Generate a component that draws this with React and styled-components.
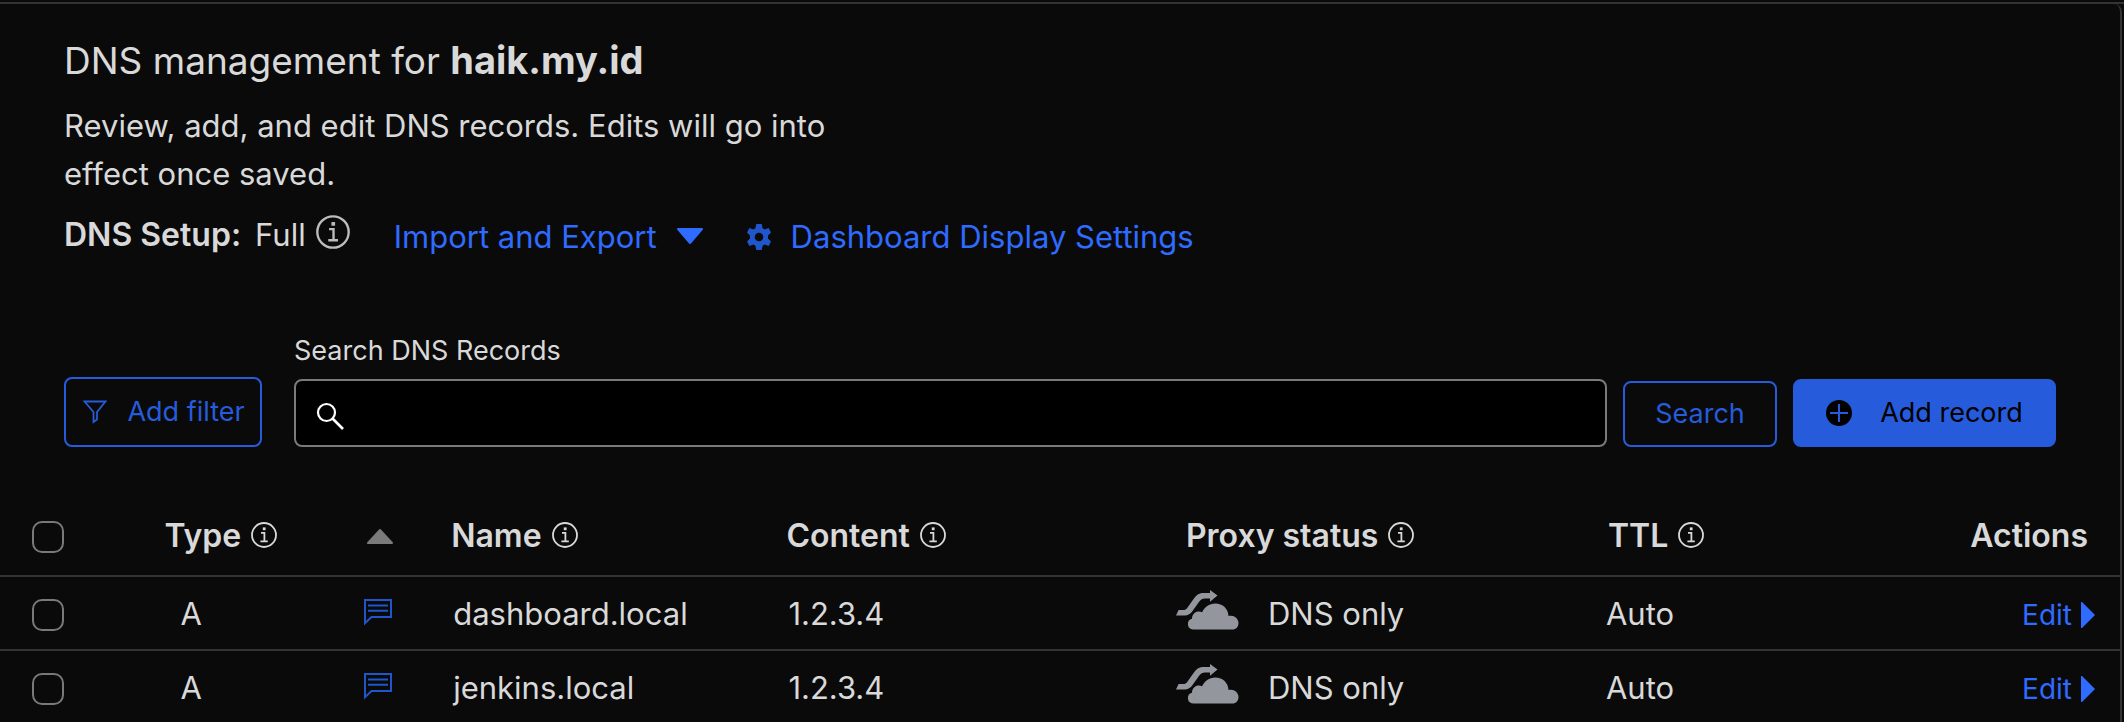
import React from "react";
import styled, { createGlobalStyle } from "styled-components";

const Global = createGlobalStyle`
  *, *::before, *::after { box-sizing: border-box; }
  body {
    margin: 0;
    background: #0a0a0a;
    color: #d9d9d9;
    font-family: Inter, "Liberation Sans", sans-serif;
    font-size: 31px;
    line-height: 48px;
    overflow: hidden;
  }
  button, input { font: inherit; }
  svg { display: block; flex: none; }
`;

const Frame = styled.div`
  margin-top: 2px;
  border-top: 2px solid #333;
`;

const Panel = styled.main`
  margin-right: 2px;
  min-height: calc(100vh - 4px);
  border-right: 2px solid #333;
  border-radius: 8px 8px 0 0;
`;

const Header = styled.header`
  padding: 31px 64px 0;
`;

const Title = styled.h1`
  margin: 0 0 16px;
  font-size: 37px;
  line-height: 50px;
  font-weight: 400;
  & > b { font-size: 38px; }
`;

const Description = styled.p`
  margin: 0;
  max-width: 800px;
`;

const SetupRow = styled.div`
  display: flex;
  align-items: center;
  margin-top: 11px;
  gap: 44px;
`;

const Setup = styled.div`
  display: flex;
  align-items: center;
  gap: 10px;
  & > b { font-size: 32px; font-weight: 600; margin-right: 4px; }
  & > svg { margin-bottom: 6px; color: #bdbdbd; }
`;

const LinkButton = styled.button`
  display: flex;
  align-items: center;
  gap: 20px;
  padding: 4px 0 0;
  border: 0;
  background: none;
  color: #2f6bff;
`;

const Toolbar = styled.form`
  display: flex;
  align-items: flex-end;
  gap: 16px;
  padding: 70px 64px 0;
`;

const SearchField = styled.div`
  flex: 1;
  min-width: 0;
  margin-left: 16px;
`;

const Label = styled.label`
  display: block;
  margin-bottom: 8px;
  font-size: 27px;
  line-height: 40px;
`;

const InputBox = styled.div`
  display: flex;
  align-items: center;
  gap: 12px;
  height: 68px;
  padding: 0 20px;
  border: 2px solid #7a7a7a;
  border-radius: 8px;
  background: #000;
  & > svg { margin-top: 6px; }
  & > input {
    flex: 1;
    min-width: 0;
    border: 0;
    outline: 0;
    background: none;
    color: #d9d9d9;
  }
`;

const Button = styled.button`
  display: flex;
  align-items: center;
  justify-content: center;
  gap: ${(p) => p.$gap || 20}px;
  width: ${(p) => p.$w}px;
  height: ${(p) => p.$h}px;
  padding: 0;
  border: 2px solid #265cdb;
  border-radius: 8px;
  background: ${(p) => (p.$primary ? "#265cdb" : "transparent")};
  color: ${(p) => (p.$primary ? "#000" : "#265cdb")};
  font-size: 27px;
  white-space: nowrap;
`;

const Table = styled.table`
  width: 100%;
  margin-top: 49px;
  border-collapse: collapse;
  table-layout: fixed;
`;

const Row = styled.tr`
  border-bottom: 2px solid #333;
`;

const Th = styled.th`
  height: 80px;
  padding: 0 0 0 ${(p) => p.$pad || 0}px;
  font-size: 32px;
  font-weight: 600;
  text-align: left;
  white-space: nowrap;
`;

const Td = styled.td`
  height: 74px;
  padding: 2px 0 0 ${(p) => p.$pad || 0}px;
  white-space: nowrap;
`;

const Inline = styled.div`
  display: flex;
  align-items: center;
  justify-content: ${(p) => (p.$end ? "flex-end" : "flex-start")};
  gap: ${(p) => p.$gap || 10}px;
  padding-right: ${(p) => (p.$end ? p.$end : 0)}px;
  & > svg { margin-bottom: ${(p) => p.$lift || 2}px; }
`;

const Check = styled.input`
  appearance: none;
  display: block;
  width: 32px;
  height: 32px;
  margin: 2px 0 0;
  border: 2px solid #797979;
  border-radius: 10px;
  background: #0a0a0a;
`;

const IconButton = styled.button`
  display: block;
  padding: 0 0 5px;
  border: 0;
  background: none;
  color: #1f56cc;
`;

const EditLink = styled.a`
  display: flex;
  align-items: center;
  gap: 8px;
  padding-top: 2px;
  color: #2f6bff;
  font-size: 28px;
  text-decoration: none;
`;

const Info = ({ size = 26 }) => (
  <svg width={size} height={size} viewBox="0 0 26 26" fill="none" stroke="currentColor" aria-hidden="true">
    <circle cx="13" cy="13" r="12" strokeWidth="1.8" />
    <path d="M10 10.800h3.400v8M9.400 19.300h7.400" strokeWidth="1.8" />
    <path d="M11.800 5.400h2.800v2.800h-2.800z" fill="currentColor" stroke="none" />
  </svg>
);

const Down = () => (
  <svg width="26" height="18" viewBox="0 0 26 18" fill="currentColor" stroke="currentColor" strokeWidth="2" strokeLinejoin="round" aria-hidden="true">
    <path d="M1 1h24L13 15z" />
  </svg>
);

const Up = () => (
  <svg width="26" height="18" viewBox="0 0 26 18" fill="#7a7a7a" stroke="#7a7a7a" strokeWidth="2" strokeLinejoin="round" aria-hidden="true">
    <path d="M1 16h24L13 3z" />
  </svg>
);

const Right = () => (
  <svg width="16" height="26" viewBox="0 0 16 26" fill="currentColor" aria-hidden="true">
    <path d="M1 0h1l13 13L2 26H1z" />
  </svg>
);

const Gear = () => (
  <svg width="24" height="26" viewBox="0 0 24 26" fill="#1f56cc" fillRule="evenodd" aria-hidden="true">
    <path d="M9.300 0h5.400l.9 4.200 2 1.200 4-1.400 2.400 4.600-3 3v2.800l3 3-2.400 4.600-4-1.400-2 1.200-.9 4.200H9.300l-.9-4.200-2-1.200-4 1.400L0 17.400l3-3v-2.800l-3-3L2.400 4l4 1.400 2-1.200zM12 8.700a4.300 4.300 0 1 0 0 8.600 4.300 4.300 0 0 0 0-8.600z" />
  </svg>
);

const Funnel = () => (
  <svg width="26" height="24" viewBox="0 0 26 24" fill="none" stroke="currentColor" strokeWidth="1.8" strokeLinejoin="miter" aria-hidden="true">
    <path d="M3.500 1.500h21L16 12v7.500L12.500 22V12z" />
  </svg>
);

const Magnifier = () => (
  <svg width="28" height="28" viewBox="0 0 28 28" fill="none" stroke="#fff" strokeWidth="2.200" aria-hidden="true">
    <circle cx="10.500" cy="10.500" r="8.500" />
    <path d="M16.500 16.500L27 27" strokeWidth="2.600" />
  </svg>
);

const Plus = () => (
  <svg width="26" height="26" viewBox="0 0 26 26" aria-hidden="true">
    <circle cx="13" cy="13" r="13" fill="#000" />
    <path d="M13 4v18M4 13h18" stroke="#265cdb" strokeWidth="2" />
  </svg>
);

const Comment = () => (
  <svg width="30" height="28" viewBox="0 0 30 28" fill="none" stroke="currentColor" strokeWidth="2" aria-hidden="true">
    <path d="M2 2h26v17H8.500L2 25.200z" />
    <path d="M5 7.500h20M5 12.800h20" />
  </svg>
);

const Cloud = () => (
  <svg width="64" height="40" viewBox="0 0 64 40" fill="#93979d" aria-hidden="true">
    <path d="M0 25.500 2.600 20h4.800c1.500 0 2.700-.5 3.800-2l6.200-8.700C20.500 4.500 23.500 3 28 3h6V0l7.500 5.500L34 11.700V8.500h-5c-2.500 0-4.200.9-5.700 3l-6.600 9.300c-2.300 3.300-4.600 4.700-8.200 4.700z" />
    <path d="M17 39.500a5.500 5.500 0 0 1-1-10.800c0-6 5.600-8.700 10.200-6.500C28.500 17 33 13.500 39.300 13.500c7.500 0 13 5.300 13.200 12.500 5-1.500 10 2 10 7 0 3.800-2.500 6.500-6 6.500z" />
  </svg>
);

const records = [
  { type: "A", name: "dashboard.local", content: "1.2.3.4", proxy: "DNS only", ttl: "Auto" },
  { type: "A", name: "jenkins.local", content: "1.2.3.4", proxy: "DNS only", ttl: "Auto" },
];

const columnWidths = ["7%", "9%", "5%", "16%", "18%", "20%", "15%", "10%"];

export default function App() {
  return (
    <>
      <Global />
      <Frame>
        <Panel>
          <Header>
            <Title>DNS management for <b>haik.my.id</b></Title>
            <Description>Review, add, and edit DNS records. Edits will go into effect once saved.</Description>
            <SetupRow>
              <Setup><b>DNS Setup:</b><span>Full</span><Info size={34} /></Setup>
              <LinkButton type="button">Import and Export <Down /></LinkButton>
              <LinkButton type="button"><Gear /> Dashboard Display Settings</LinkButton>
            </SetupRow>
          </Header>
          <Toolbar onSubmit={(e) => e.preventDefault()}>
            <Button type="button" $w={198} $h={70}><Funnel />Add filter</Button>
            <SearchField>
              <Label htmlFor="search">Search DNS Records</Label>
              <InputBox><Magnifier /><input id="search" type="text" /></InputBox>
            </SearchField>
            <Button type="submit" $w={154} $h={66}>Search</Button>
            <Button type="button" $primary $w={263} $h={68} $gap={28}><Plus />Add record</Button>
          </Toolbar>
          <Table>
            <colgroup>
              {columnWidths.map((width, i) => <col key={i} width={width} />)}
            </colgroup>
            <thead>
              <Row>
                <Th $pad={32}><Check type="checkbox" aria-label="Select all records" /></Th>
                <Th $pad={16}><Inline>Type <Info /></Inline></Th>
                <Th $pad={28}><Up /></Th>
                <Th $pad={6}><Inline>Name <Info /></Inline></Th>
                <Th $pad={2}><Inline>Content <Info /></Inline></Th>
                <Th $pad={20}><Inline>Proxy status <Info /></Inline></Th>
                <Th $pad={18}><Inline>TTL <Info /></Inline></Th>
                <Th><Inline $end={32}>Actions</Inline></Th>
              </Row>
            </thead>
            <tbody>
              {records.map((r) => (
                <Row key={r.name}>
                  <Td $pad={32}><Check type="checkbox" aria-label={"Select " + r.name} /></Td>
                  <Td $pad={32}>{r.type}</Td>
                  <Td $pad={24}><IconButton type="button" aria-label="Comment"><Comment /></IconButton></Td>
                  <Td $pad={8}>{r.name}</Td>
                  <Td $pad={4}>{r.content}</Td>
                  <Td $pad={10}><Inline $gap={28} $lift={8}><Cloud />{r.proxy}</Inline></Td>
                  <Td $pad={16}>{r.ttl}</Td>
                  <Td><Inline $end={24}><EditLink href="#edit">Edit <Right /></EditLink></Inline></Td>
                </Row>
              ))}
            </tbody>
          </Table>
        </Panel>
      </Frame>
    </>
  );
}
